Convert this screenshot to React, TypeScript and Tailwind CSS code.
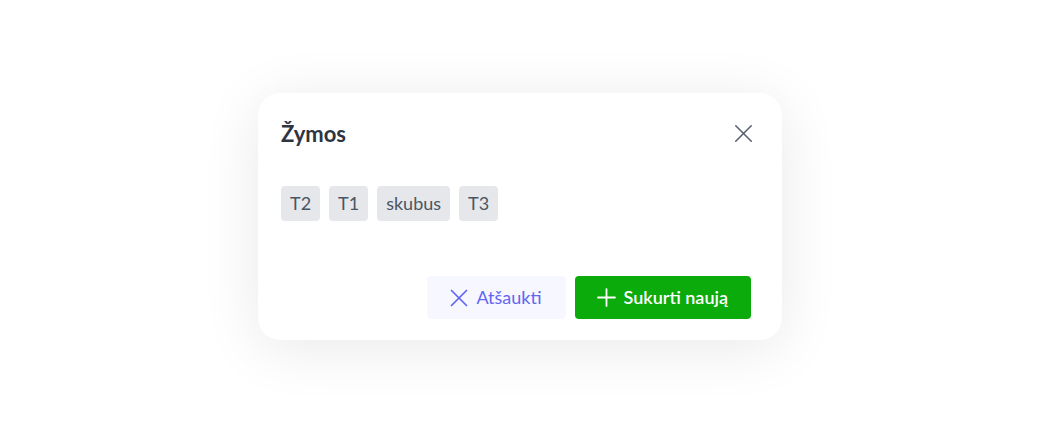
import { X, Plus } from 'lucide-react';

const TAGS = ['T2', 'T1', 'skubus', 'T3'];

export default function App() {
  return (
    <div className="flex h-[433px] w-[1040px] items-center justify-center bg-white font-['Lato',sans-serif]">
      <div className="flex h-[247px] w-[524px] flex-col rounded-[22px] bg-white pt-6 pr-[31px] pb-[21px] pl-[23px] shadow-[0_8px_60px_rgba(0,0,0,0.09)]">
        <div className="flex h-8 items-center justify-between">
          <h2 className="text-[22px] font-bold text-[#2f3441]">Žymos</h2>
          <button className="-mr-2 text-[#5b6170]" aria-label="Uždaryti">
            <X size={31} strokeWidth={1.2} />
          </button>
        </div>

        <div className="mt-[37px] flex gap-[9px]">
          {TAGS.map((tag) => (
            <span
              key={tag}
              className="flex h-[35px] items-center rounded-[4px] bg-[#e5e7eb] px-[9px] text-[18px] text-[#4b5563]"
            >
              {tag}
            </span>
          ))}
        </div>

        <div className="mt-[55px] flex justify-end gap-[9px]">
          <button className="flex h-[43px] items-center gap-[2px] rounded-[4px] bg-[#f7f7ff] pl-[17px] pr-6 text-[18px] text-[#6366f1]">
            <X size={30} strokeWidth={1.4} />
            Atšaukti
          </button>
          <button className="flex h-[43px] items-center gap-[3px] rounded-[4px] bg-[#0aab0a] pl-[17px] pr-[23px] text-[18px] font-semibold text-white">
            <Plus size={29} strokeWidth={1.5} />
            Sukurti naują
          </button>
        </div>
      </div>
    </div>
  );
}
